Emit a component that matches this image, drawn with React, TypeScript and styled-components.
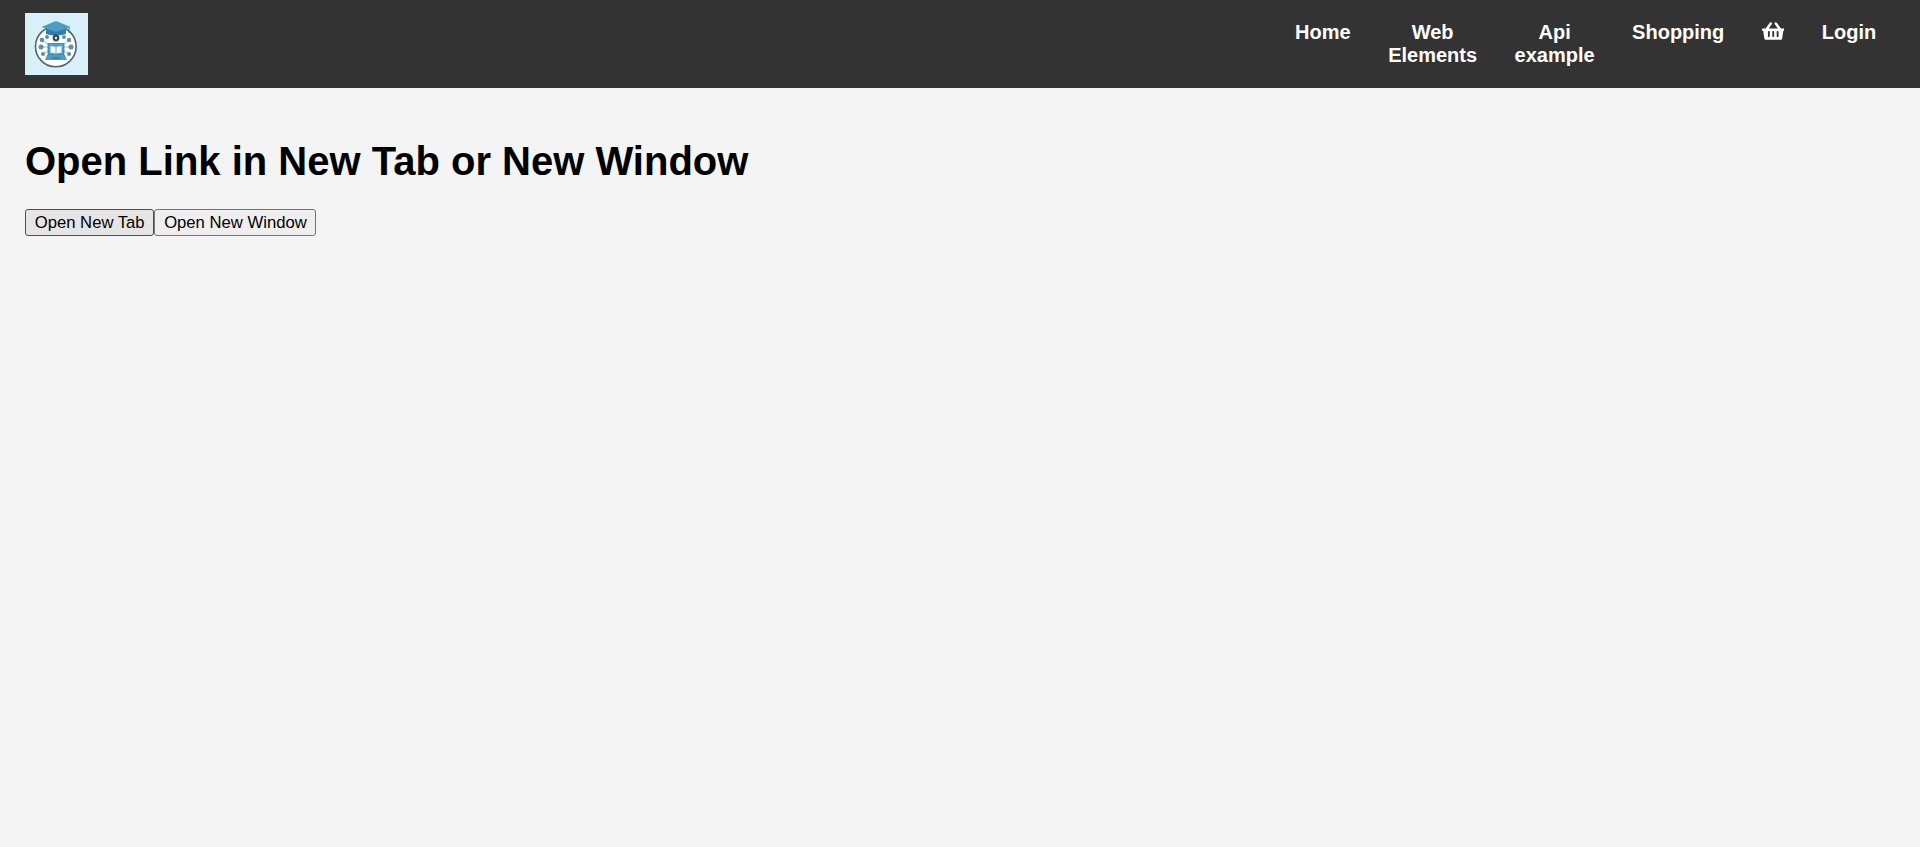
import { createGlobalStyle, styled } from 'styled-components';
import { FaShoppingBasket } from 'react-icons/fa';

const GlobalStyle = createGlobalStyle`
  html,
  body {
    margin: 0;
    padding: 0;
    min-height: 100%;
    background-color: #f4f4f4;
    font-family: 'Liberation Sans', Arial, sans-serif;
  }
`;

const NAV_ITEMS = [
  { label: 'Home' },
  { label: 'Web Elements', narrow: true },
  { label: 'Api example', narrow: true },
  { label: 'Shopping' },
];

// small round nodes around the laptop in the logo: x, y, radius
const LOGO_NODES = [
  [22, 24, 2],
  [39, 24, 2],
  [17, 27, 2.3],
  [44, 27, 2.3],
  [16, 34, 2.5],
  [46, 34, 2.5],
  [18, 41, 2.1],
  [44, 41, 2.1],
];

function Logo() {
  return (
    <LogoBox>
      <LogoArt width="63" height="62" viewBox="0 0 63 62" aria-hidden="true">
        <circle cx="30.8" cy="33.5" r="20.3" fill="#fff" stroke="#56656d" strokeWidth="1.6" />
        <path d="M21 16 L21 21 Q31 24 41 21 L41 16 Z" fill="#2f7ea6" />
        <path d="M16.5 14 L31 8 L45.5 14 L31 19 Z" fill="#4a9cc4" />
        <path d="M44 14 L44 20" stroke="#2f7ea6" strokeWidth="1" />
        <path
          d="M17 27 L23 31 M44 27 L39 31 M16 34 L23 34 M46 34 L39 34 M18 41 L23 38 M44 41 L39 38"
          stroke="#7d99a6"
          strokeWidth="0.7"
          fill="none"
        />
        {LOGO_NODES.map(([cx, cy, r]) => (
          <circle key={`${cx}-${cy}`} cx={cx} cy={cy} r={r} fill="#5793b0" />
        ))}
        <circle cx="31" cy="25" r="3.4" fill="#3d4b53" />
        <circle cx="31" cy="25" r="1.2" fill="#dfe8ec" />
        <rect x="23" y="30.5" width="16" height="11.5" fill="#4fa3cc" stroke="#2b6f91" strokeWidth="0.7" />
        <path d="M25.5 33 L31 34 L36.5 33 L36.5 39.5 L31 40.5 L25.5 39.5 Z" fill="#f2f8fb" />
        <path d="M31 34 L31 40.5" stroke="#5a6a72" strokeWidth="0.6" />
        <path d="M22 42 L40 42 L42 47 L20 47 Z" fill="#4a9cc4" />
        <rect x="27" y="44.5" width="8" height="1" fill="#2b6f91" />
      </LogoArt>
    </LogoBox>
  );
}

export default function App() {
  return (
    <>
      <GlobalStyle />
      <Header>
        <Logo />
        <Nav>
          {NAV_ITEMS.map(item => (
            <NavLink key={item.label} href="#" $narrow={item.narrow}>
              {item.label}
            </NavLink>
          ))}
          <BasketLink href="#" aria-label="Basket">
            <FaShoppingBasket style={{ width: 22.5, height: 20 }} />
          </BasketLink>
          <NavLink href="#">Login</NavLink>
        </Nav>
      </Header>
      <Main>
        <Title>Open Link in New Tab or New Window</Title>
        <ButtonRow>
          <ActionButton $hovered>Open New Tab</ActionButton>
          <ActionButton>Open New Window</ActionButton>
        </ButtonRow>
      </Main>
    </>
  );
}

const Header = styled.header`
  display: flex;
  justify-content: space-between;
  align-items: flex-start;

  height: 88px;
  padding: 13px 25px 0;
  box-sizing: border-box;

  background-color: #333;
`;

const LogoBox = styled.div`
  display: flex;

  width: 63px;
  height: 62px;

  background-color: #d8f0f9;
`;

const LogoArt = styled.svg`
  filter: blur(0.35px);
`;

const Nav = styled.nav`
  display: flex;
  align-items: flex-start;

  margin-top: 8px;
`;

const NavLink = styled.a<{ $narrow?: boolean }>`
  display: block;

  width: ${props => (props.$narrow ? 'min-content' : 'auto')};
  padding: 0 18.75px;

  color: #fff;

  font-size: 20px;
  font-weight: bold;
  line-height: 23px;
  text-align: center;
  text-decoration: none;
`;

const BasketLink = styled.a`
  display: flex;

  padding: 0 18.75px;

  color: #fff;
  font-size: 20px;
  line-height: 23px;
`;

const Main = styled.main`
  padding: 0 25px;
`;

const Title = styled.h1`
  margin: 0;
  padding-top: 50px;

  color: #000;

  font-size: 40px;
  font-weight: bold;
  line-height: 46px;
`;

const ButtonRow = styled.div`
  display: flex;

  margin-top: 25px;
`;

const ActionButton = styled.button<{ $hovered?: boolean }>`
  padding: 2px 8.75px;

  border: 1px solid ${props => (props.$hovered ? '#4f4f4f' : '#767676')};
  border-radius: 3px;

  color: #000;
  background-color: ${props => (props.$hovered ? '#e5e5e5' : '#efefef')};

  font-family: 'Liberation Sans', Arial, sans-serif;
  font-size: 16.667px;
  line-height: 21px;
`;
